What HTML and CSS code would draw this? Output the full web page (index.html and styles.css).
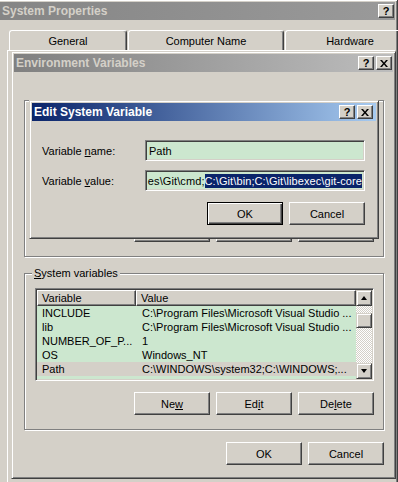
FILE: index.html
```html
<!DOCTYPE html>
<html lang="en">
<head>
    <meta charset="UTF-8">
    <title>System Properties - Environment Variables</title>
    <link rel="stylesheet" href="styles.css">
</head>
<body>
    <!-- back window -->
    <div class="window sys-win">
        <div class="titlebar inactive-flat">
            <span class="title">System Properties</span>
            <span class="tbtn">?</span>
        </div>
        <div class="tabs">
            <div class="tab tab-general">General</div>
            <div class="tab tab-name">Computer Name</div>
            <div class="tab tab-hw">Hardware</div>
        </div>
        <div class="tab-panel"></div>
    </div>

    <!-- environment variables -->
    <div class="window env-win">
        <div class="titlebar inactive">
            <span class="title">Environment Variables</span>
            <span class="tbtn">?</span>
            <span class="tbtn"><svg width="8" height="7" viewBox="0 0 8 7"><path d="M0 0h2l2 2.4L6 0h2L5 3.5 8 7H6L4 4.6 2 7H0l3-3.5z" fill="#000"/></svg></span>
        </div>
        <div class="env-body">
            <div class="group user-group">
                <div class="listview"></div>
                <div class="btn-row">
                    <span class="btn">New...</span>
                    <span class="btn">Edit...</span>
                    <span class="btn">Delete</span>
                </div>
            </div>
            <div class="group sys-group">
                <div class="group-label"><u>S</u>ystem variables</div>
                <div class="listview">
                    <div class="lv-main">
                        <div class="lv-head">
                            <span class="lv-col">Variable</span>
                            <span class="lv-col">Value</span>
                        </div>
                        <div class="lv-row"><span>INCLUDE</span><span>C:\Program Files\Microsoft Visual Studio ...</span></div>
                        <div class="lv-row"><span>lib</span><span>C:\Program Files\Microsoft Visual Studio ...</span></div>
                        <div class="lv-row"><span>NUMBER_OF_P...</span><span>1</span></div>
                        <div class="lv-row"><span>OS</span><span>Windows_NT</span></div>
                        <div class="lv-row selected"><span>Path</span><span>C:\WINDOWS\system32;C:\WINDOWS;...</span></div>
                    </div>
                    <div class="scrollbar">
                        <span class="sb-btn"><i class="arrow-up"></i></span>
                        <span class="sb-track top"></span>
                        <span class="sb-thumb"></span>
                        <span class="sb-track"></span>
                        <span class="sb-btn"><i class="arrow-down"></i></span>
                    </div>
                </div>
                <div class="btn-row">
                    <span class="btn">Ne<u>w</u></span>
                    <span class="btn">Ed<u>i</u>t</span>
                    <span class="btn">De<u>l</u>ete</span>
                </div>
            </div>
            <div class="btn-row dialog-btns">
                <span class="btn">OK</span>
                <span class="btn">Cancel</span>
            </div>
        </div>
    </div>

    <!-- edit dialog -->
    <div class="window edit-win">
        <div class="titlebar active">
            <span class="title">Edit System Variable</span>
            <span class="tbtn">?</span>
            <span class="tbtn"><svg width="8" height="7" viewBox="0 0 8 7"><path d="M0 0h2l2 2.4L6 0h2L5 3.5 8 7H6L4 4.6 2 7H0l3-3.5z" fill="#000"/></svg></span>
        </div>
        <div class="edit-body">
            <div class="field-grid">
                <label>Variable <u>n</u>ame:</label>
                <div class="input"><span>Path</span></div>
                <label>Variable <u>v</u>alue:</label>
                <div class="input value-input"><span>es\Git\cmd;</span><span class="sel">C:\Git\bin;C:\Git\libexec\git-core</span></div>
            </div>
            <div class="btn-row edit-btns">
                <span class="btn default">OK</span>
                <span class="btn">Cancel</span>
            </div>
        </div>
    </div>
</body>
</html>
```

FILE: styles.css
```css
:root { --face: #d4d0c8; --light: #fff; --shadow: #808080; --dark: #404040; --field: #cce7cf; --navy: #0a246a; }
* { box-sizing: border-box; }
body { margin: 0; width: 398px; height: 482px; overflow: hidden; position: relative; background: var(--face); font-family: "Liberation Sans", Arial, sans-serif; font-size: 11px; color: #000; }
u { text-decoration: underline; text-underline-offset: 1px; }

/* windows */
.window { position: absolute; display: flex; flex-direction: column; background: var(--face); border: 1px solid; border-color: var(--face) var(--dark) var(--dark) var(--face); box-shadow: inset 1px 1px var(--light), inset -1px -1px var(--shadow); padding: 2px; }
.sys-win { left: -3px; top: -1px; width: 401px; height: 500px; }
.env-win { left: 11px; top: 51px; width: 385px; height: 428px; }
.edit-win { left: 29px; top: 100px; width: 350px; height: 139px; }

.titlebar { height: 18px; flex-shrink: 0; display: flex; align-items: center; gap: 2px; padding: 0 1px 0 2px; }
.edit-win .titlebar { padding-right: 3px; }
.title { flex: 1; font-weight: bold; font-size: 12px; white-space: nowrap; }
.inactive-flat { background: linear-gradient(to right, #858585, #9a9a9a); color: var(--face); }
.inactive { background: linear-gradient(to right, #808080, #bdbdbd); color: var(--face); }
.active { background: linear-gradient(to right, var(--navy), #a6caf0); color: #fff; }
.tbtn { width: 16px; height: 14px; display: flex; align-items: center; justify-content: center; background: var(--face); border: 1px solid; border-color: var(--light) var(--dark) var(--dark) var(--light); box-shadow: inset -1px -1px var(--shadow); color: #000; font-weight: bold; font-size: 11px; line-height: 1; }

/* tabs of the back window */
.tabs { display: flex; gap: 1px; margin: 10px 0 0 9px; height: 20px; }
.tab { height: 20px; display: flex; align-items: center; justify-content: center; border: 1px solid; border-bottom: 0; border-color: var(--light) var(--dark) transparent var(--light); border-radius: 3px 3px 0 0; box-shadow: inset -1px 0 var(--shadow); flex-shrink: 0; }
.tab-general { width: 118px; }
.tab-name { width: 156px; }
.tab-hw { width: 130px; }
.tab-panel { flex: 1; margin-left: 7px; border-top: 1px solid var(--light); border-left: 1px solid var(--light); }

/* environment body */
.env-body { flex: 1; display: flex; flex-direction: column; padding: 28px 9px 0 10px; }
.group { height: 157px; display: flex; flex-direction: column; border: 1px solid var(--shadow); box-shadow: inset 1px 1px var(--light), 1px 1px var(--light); padding: 0 9px 14px 10px; }
.user-group { padding-top: 14px; }
.sys-group { margin-top: 16px; }
.group-label { align-self: flex-start; height: 13px; line-height: 13px; margin: -7px 0 0 -3px; padding: 0 2px; background: var(--face); }
.listview { flex: 1; margin-top: 8px; display: flex; background: var(--field); border: 1px solid; border-color: var(--shadow) var(--light) var(--light) var(--shadow); box-shadow: inset 1px 1px var(--dark), inset -1px -1px var(--face); padding: 1px; }
.lv-main { flex: 1; display: flex; flex-direction: column; }
.lv-head { display: grid; grid-template-columns: 99px 1fr; height: 16px; }
.lv-col { display: flex; align-items: center; padding-left: 4px; background: var(--face); border: 1px solid; border-color: var(--light) var(--dark) var(--dark) var(--light); box-shadow: inset -1px -1px var(--shadow); }
.lv-row { display: grid; grid-template-columns: 99px 1fr; height: 14px; line-height: 14px; white-space: nowrap; }
.lv-row span { padding-left: 5px; overflow: hidden; }
.lv-row span + span { padding-left: 6px; }
.lv-row.selected { background: var(--face); }
.scrollbar { width: 16px; display: flex; flex-direction: column; }
.sb-btn, .sb-thumb { display: flex; align-items: center; justify-content: center; background: var(--face); border: 1px solid; border-color: var(--face) var(--dark) var(--dark) var(--face); box-shadow: inset 1px 1px var(--light), inset -1px -1px var(--shadow); }
.sb-btn { height: 16px; }
.sb-thumb { height: 15px; }
.sb-track { flex: 1; background: repeating-conic-gradient(var(--light) 0 25%, var(--face) 0 50%) 0 0 / 2px 2px; }
.sb-track.top { flex: 0 0 7px; }
.arrow-up, .arrow-down { width: 0; height: 0; border-left: 3.5px solid transparent; border-right: 3.5px solid transparent; }
.arrow-up { border-bottom: 4px solid #000; }
.arrow-down { border-top: 4px solid #000; }

/* buttons */
.btn-row { display: flex; justify-content: flex-end; gap: 6px; margin-top: 11px; }
.dialog-btns { margin-top: 12px; }
.btn { width: 76px; height: 23px; display: flex; align-items: center; justify-content: center; background: var(--face); border: 1px solid; border-color: var(--light) var(--dark) var(--dark) var(--light); box-shadow: inset -1px -1px var(--shadow); }
.btn.default { border-color: #000; box-shadow: inset 1px 1px var(--light), inset -1px -1px var(--dark), inset -2px -2px var(--shadow); }

/* edit dialog */
.edit-body { flex: 1; display: flex; flex-direction: column; padding: 19px 11px 0 10px; }
.field-grid { display: grid; grid-template-columns: 103px 220px; row-gap: 9px; align-items: center; }
.input { height: 21px; display: flex; align-items: center; padding: 0 3px; background: var(--field); border: 1px solid; border-color: var(--shadow) var(--light) var(--light) var(--shadow); box-shadow: inset 1px 1px var(--dark), inset -1px -1px var(--face); white-space: nowrap; overflow: hidden; }
.value-input { justify-content: flex-end; padding: 0 2px; }
.value-input span { flex-shrink: 0; letter-spacing: 0.1px; }
.sel { background: var(--navy); color: #fff; line-height: 14px; }
```
